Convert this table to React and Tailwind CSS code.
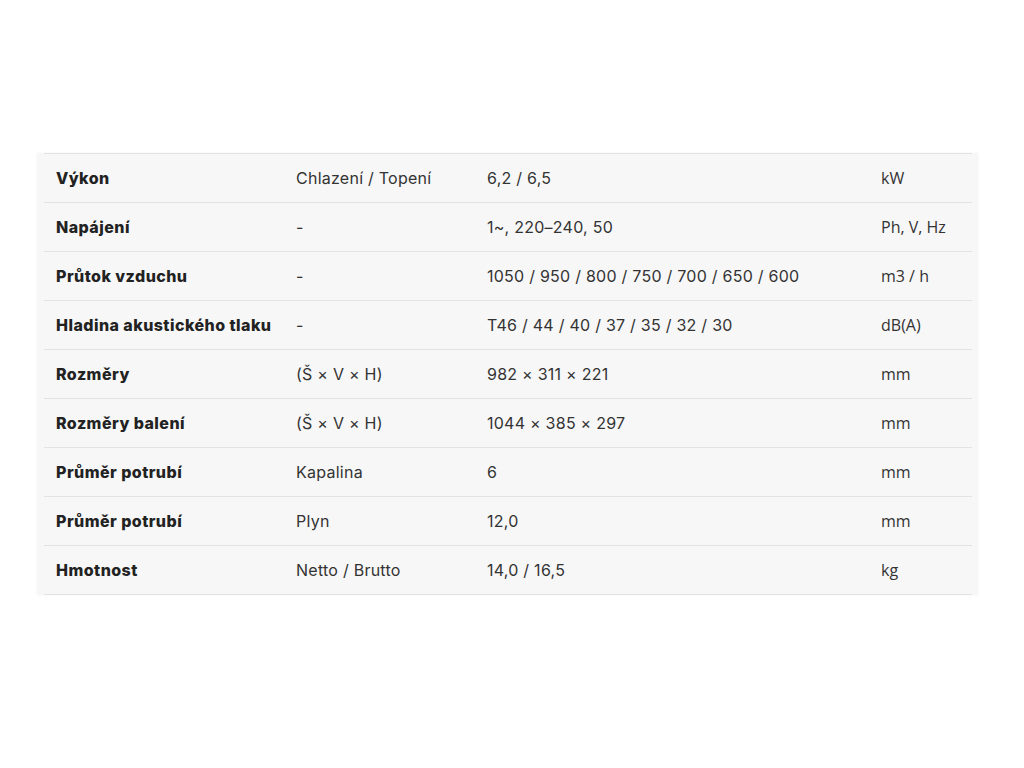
import React from "react";

const rows = [
  ["Výkon", "Chlazení / Topení", "6,2 / 6,5", "kW"],
  ["Napájení", "-", "1~, 220–240, 50", "Ph, V, Hz"],
  ["Průtok vzduchu", "-", "1050 / 950 / 800 / 750 / 700 / 650 / 600", "m3 / h"],
  ["Hladina akustického tlaku", "-", "T46 / 44 / 40 / 37 / 35 / 32 / 30", "dB(A)"],
  ["Rozměry", "(Š × V × H)", "982 × 311 × 221", "mm"],
  ["Rozměry balení", "(Š × V × H)", "1044 × 385 × 297", "mm"],
  ["Průměr potrubí", "Kapalina", "6", "mm"],
  ["Průměr potrubí", "Plyn", "12,0", "mm"],
  ["Hmotnost", "Netto / Brutto", "14,0 / 16,5", "kg"],
];

export default function App() {
  return (
    <div className="w-[1024px] h-[768px] bg-white pt-[153px] pl-[37px]">
      <div className="w-[941px] bg-[#f7f7f7] pl-[7px] pr-[6px] shadow-[0_0_2px_rgba(0,0,0,0.06)]">
        <div className="border-t border-[#e3e3e3]">
          {rows.map((r, i) => (
            <div
              key={i}
              className="flex h-[49px] items-center border-b border-[#e3e3e3] text-[16px] text-[#333] font-['Inter',sans-serif]"
            >
              <div className="w-[240px] pl-3 font-extrabold text-[#222] tracking-[0.45px]">{r[0]}</div>
              <div className="w-[191px] pl-3 tracking-[0.25px]">{r[1]}</div>
              <div className="w-[394px] pl-3 tracking-[0.25px]">{r[2]}</div>
              <div className="flex-1 pl-3 text-[16px] font-['Open_Sans',sans-serif]">
                {r[3]}
              </div>
            </div>
          ))}
        </div>
      </div>
    </div>
  );
}
